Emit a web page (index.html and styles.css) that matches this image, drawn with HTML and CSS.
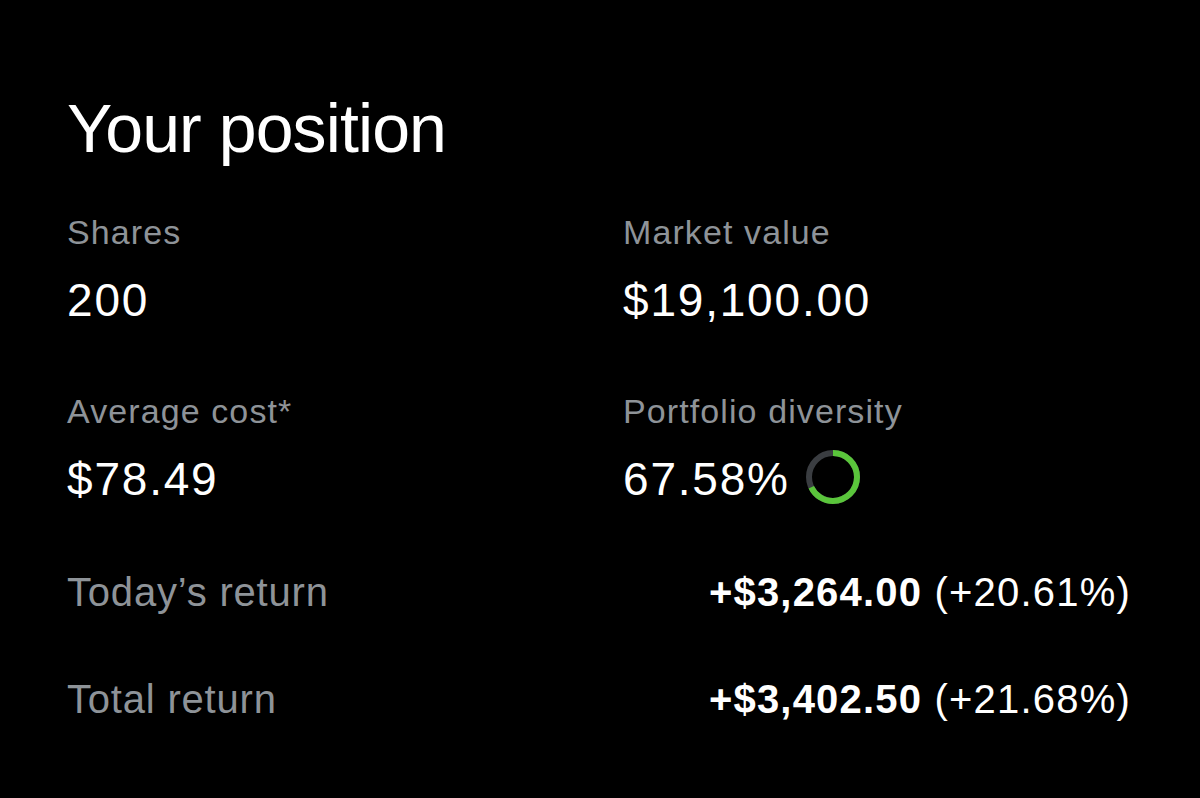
FILE: index.html
```html
<!DOCTYPE html>
<html lang="en">
<head>
<meta charset="utf-8">
<title>Your position</title>
<link rel="stylesheet" href="styles.css">
</head>
<body>
<main class="position">
  <h1 class="title">Your position</h1>
  <div class="stats">
    <div class="stat">
      <div class="label">Shares</div>
      <div class="value">200</div>
    </div>
    <div class="stat">
      <div class="label">Market value</div>
      <div class="value">$19,100.00</div>
    </div>
    <div class="stat">
      <div class="label">Average cost*</div>
      <div class="value">$78.49</div>
    </div>
    <div class="stat">
      <div class="label">Portfolio diversity</div>
      <div class="value value-ring">
        <span>67.58%</span>
        <svg class="ring" width="54" height="54" viewBox="0 0 54 54" aria-hidden="true">
          <circle cx="27" cy="27" r="24" fill="none" stroke="#3a3d41" stroke-width="6"/>
          <circle cx="27" cy="27" r="24" fill="none" stroke="#5ac53b" stroke-width="6" stroke-dasharray="101.9 150.8" transform="rotate(-90 27 27)"/>
        </svg>
      </div>
    </div>
  </div>
  <div class="returns">
    <div class="return-row">
      <span class="return-label">Today’s return</span>
      <span class="return-value"><b>+$3,264.00</b> (+20.61%)</span>
    </div>
    <div class="return-row">
      <span class="return-label">Total return</span>
      <span class="return-value"><b>+$3,402.50</b> (+21.68%)</span>
    </div>
  </div>
</main>
</body>
</html>
```

FILE: styles.css
```css
html, body {
  margin: 0;
  padding: 0;
  background: #000;
}

body {
  width: 1200px;
  height: 798px;
  overflow: hidden;
  font-family: "Liberation Sans", Arial, Helvetica, sans-serif;
  color: #fff;
}

.position {
  padding: 88px 69px 0 67px;
}

.title {
  margin: 0;
  font-size: 68px;
  line-height: 80px;
  font-weight: 400;
  letter-spacing: -0.9px;
  color: #fff;
}

.stats {
  display: grid;
  grid-template-columns: 556px 1fr;
  row-gap: 65px;
  margin-top: 44px;
}

.stat {
  display: flex;
  flex-direction: column;
  gap: 22px;
}

.label {
  font-size: 34px;
  line-height: 40px;
  letter-spacing: 1.1px;
  color: #8e9398;
}

.value {
  font-size: 46px;
  line-height: 52px;
  letter-spacing: 1.8px;
  color: #fff;
}

.value-ring {
  display: flex;
  align-items: center;
  gap: 16px;
}

.ring {
  display: block;
  margin-top: -5px;
}

.returns {
  display: flex;
  flex-direction: column;
  gap: 59px;
  margin-top: 63px;
}

.return-row {
  display: flex;
  justify-content: space-between;
  align-items: center;
  font-size: 40px;
  line-height: 48px;
}

.return-label {
  color: #8e9398;
  letter-spacing: 0.8px;
}

.return-value {
  color: #fff;
  letter-spacing: 1.2px;
}

.return-value b {
  font-weight: 700;
}
```
